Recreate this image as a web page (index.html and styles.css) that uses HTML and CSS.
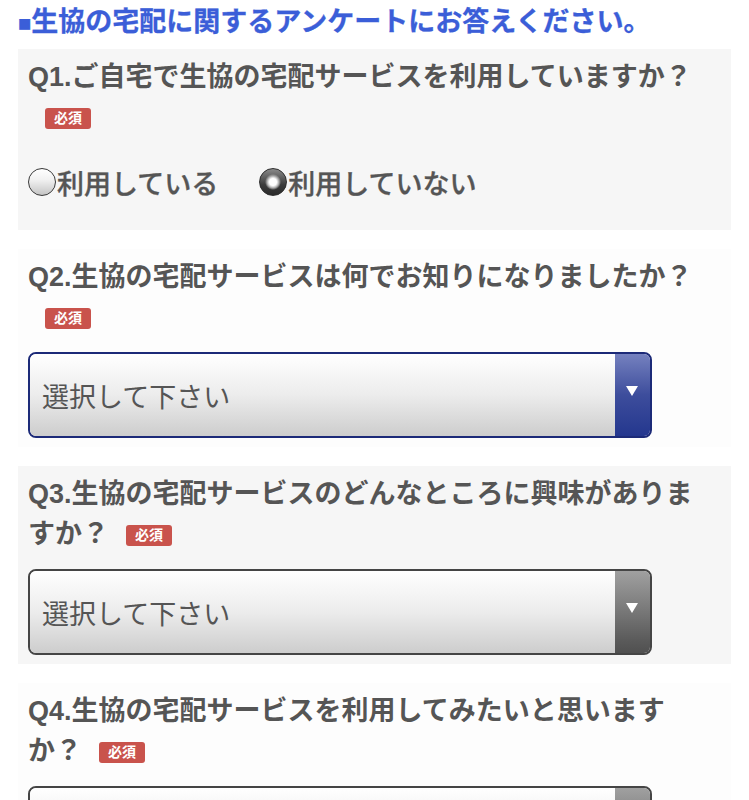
FILE: index.html
```html
<!DOCTYPE html>
<html lang="ja">
<head>
<meta charset="utf-8">
<title>生協の宅配に関するアンケート</title>
<link rel="stylesheet" href="styles.css">
</head>
<body>
<div class="page">
  <h1 class="title"><span class="sq">■</span>生協の宅配に関するアンケートにお答えください。</h1>

  <section class="q q-odd">
    <h2 class="q-title">Q1.ご自宅で生協の宅配サービスを利用していますか？<span class="req">必須</span></h2>
    <div class="radios">
      <label class="radio"><span class="dot"></span>利用している</label>
      <label class="radio"><span class="dot dot-on"></span>利用していない</label>
    </div>
  </section>

  <section class="q">
    <h2 class="q-title">Q2.生協の宅配サービスは何でお知りになりましたか？<span class="req">必須</span></h2>
    <div class="select select-blue">
      <div class="select-value">選択して下さい</div>
      <div class="select-btn"><span class="arrow"></span></div>
    </div>
  </section>

  <section class="q q-odd">
    <h2 class="q-title">Q3.生協の宅配サービスのどんなところに興味がありますか？<span class="req">必須</span></h2>
    <div class="select">
      <div class="select-value">選択して下さい</div>
      <div class="select-btn"><span class="arrow"></span></div>
    </div>
  </section>

  <section class="q">
    <h2 class="q-title">Q4.生協の宅配サービスを利用してみたいと思いますか？<span class="req">必須</span></h2>
    <div class="select">
      <div class="select-value">選択して下さい</div>
      <div class="select-btn"><span class="arrow"></span></div>
    </div>
  </section>
</div>
</body>
</html>
```

FILE: styles.css
```css
* { box-sizing: border-box; }

body {
  margin: 0;
  background: #fff;
  font-family: "Liberation Sans", "Noto Sans CJK JP", sans-serif;
  color: #555;
}

.page {
  padding: 2px 18px 0;
}

.title {
  margin: 0 0 7px;
  height: 40px;
  font-size: 27px;
  line-height: 40px;
  font-weight: 700;
  color: #3b5ed8;
  -webkit-text-stroke: 0.3px #3b5ed8;
}

.sq {
  font-size: 22px;
  line-height: 1;
}

.q {
  padding: 8px 10px 9px;
  margin-bottom: 19px;
  background: #fdfdfd;
}

.q-odd {
  background: #f6f6f6;
}

.q-title {
  margin: 0;
  padding-right: 18px;
  font-size: 27px;
  line-height: 40px;
  font-weight: 700;
  color: #555;
}

.req {
  display: inline-block;
  margin-left: 17px;
  padding: 0 9px;
  height: 21px;
  line-height: 21px;
  font-size: 14px;
  font-weight: 700;
  color: #fff;
  background: #c9534c;
  border-radius: 3px;
  vertical-align: middle;
  -webkit-text-stroke: 0;
}

.radios {
  display: flex;
  align-items: center;
  gap: 41px;
  height: 40px;
  margin: 25px 0 19px;
}

.radio {
  display: flex;
  align-items: center;
  font-size: 27px;
  font-weight: 500;
  color: #555;
  -webkit-text-stroke: 0.35px #555;
}

.dot {
  width: 28px;
  height: 28px;
  margin-right: 1px;
  border-radius: 50%;
  border: 1.5px solid #3a3a3a;
  background: linear-gradient(#ffffff, #f2f2f2 40%, #c4c4c4);
}

.dot-on {
  border-color: #2e2e2e;
  background:
    radial-gradient(circle, #ffffff 0 3.5px, #e2e2e2 4.5px, #a8a8a8 6px, rgba(80,80,80,0) 8px),
    linear-gradient(#8a8a8a, #3c3c3c 60%, #2a2a2a);
}

.select {
  display: flex;
  width: 90%;
  height: 86px;
  margin-top: 15px;
  border: 2px solid #454545;
  border-radius: 8px;
  overflow: hidden;
}

.select-value {
  flex: 1;
  display: flex;
  align-items: center;
  padding-left: 12px;
  font-size: 27px;
  font-weight: 400;
  color: #555;
  background: linear-gradient(#ffffff, #ececec 50%, #cdcdcd);
}

.select-btn {
  width: 35px;
  display: flex;
  justify-content: center;
  align-items: flex-start;
  padding-top: 32px;
  background: linear-gradient(#a0a0a0, #5a5a5a 85%, #505050);
}

.select-blue {
  border-color: #1c2a78;
}

.select-blue .select-btn {
  background: linear-gradient(#7581bf, #3d4d9c 50%, #24378e);
}

.arrow {
  width: 0;
  height: 0;
  border-left: 6px solid transparent;
  border-right: 6px solid transparent;
  border-top: 10px solid #fff;
}
```
